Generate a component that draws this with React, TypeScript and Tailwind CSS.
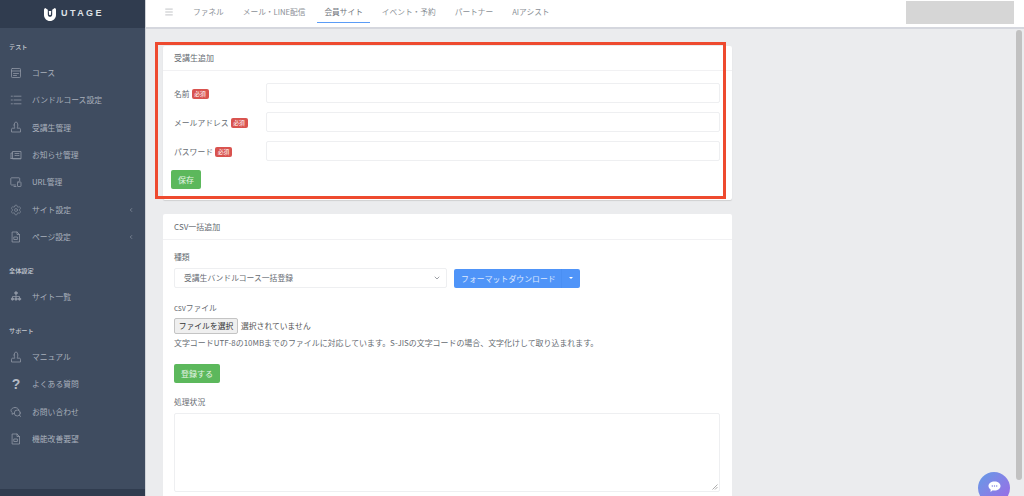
import { ChevronLeft, Menu, ChevronDown, Settings } from "lucide-react";
import React from "react";

const I = ({ children }: { children: React.ReactNode }) => (
  <svg width="12" height="12" viewBox="0 0 12 12" fill="none" stroke="#8f97a5" strokeWidth="0.8" strokeLinecap="round" strokeLinejoin="round">
    {children}
  </svg>
);

const icons: Record<string, React.ReactNode> = {
  course: <I><rect x="1.5" y="1.5" width="9" height="9" rx="0.8" /><path d="M1.5 4h9M3.5 6.500h5M3.500 8.500h3" /></I>,
  list: <I><path d="M1.200 2.200h1.200M1.200 6h1.200M1.200 9.800h1.200M4 2.200h7M4 6h7M4 9.800h7" /></I>,
  user: <I><path d="M4.200 4c0-1.600.8-3 1.800-3s1.800 1.400 1.800 3-.5 2.400-.6 3.200H9.500c.5 0 1 .5 1 1V11h-9V8.200c0-.5.500-1 1-1h2.300C4.700 6.400 4.200 5.600 4.200 4z" /></I>,
  news: <I><path d="M1 9.500V4h1.500M2.500 9.500V2.500h8.500v7z" /><path d="M1 9.500h9.500" /><path d="M5 4.500h4M5 6.500h1.500M7.500 6.500h1.500" /></I>,
  url: <I><path d="M5.500 9H1.500a.7.7 0 0 1-.7-.7V2.500a.7.7 0 0 1 .7-.7h7.500a.7.7 0 0 1 .7.7V5" /><path d="M4 10.500h2" /><rect x="7.500" y="6" width="3.500" height="4.500" rx="0.500" /></I>,
  page: <I><path d="M2.500 1h4.500l2.500 2.500V11h-7z" /><path d="M7 1v2.500h2.500" /><rect x="4.200" y="6" width="3.200" height="2.500" /></I>,
  sites: <I><circle cx="6" cy="3" r="1.300" fill="#8f97a5" /><circle cx="2.500" cy="9" r="1.200" fill="#8f97a5" /><circle cx="6" cy="9" r="1.200" fill="#8f97a5" /><circle cx="9.500" cy="9" r="1.200" fill="#8f97a5" /><path d="M6 4.500v3M2.500 7.800V6.500h7v1.300" /></I>,
  chat: <I><path d="M5 1.500c-2.200 0-4 1.300-4 3 0 .9.500 1.700 1.300 2.200L2 8.300l1.800-.8" /><path d="M5 1.500c1.800 0 3.300.9 3.800 2.200" /><circle cx="7.300" cy="7" r="3" /><path d="M9.500 9.200l1 1.300" /></I>,
};

const NavItem = ({ icon, label, arrow }: { icon: React.ReactNode; label: string; arrow?: boolean }) => (
  <div className="h-[27.4px] flex items-center pl-[10px] pr-[11px]">
    <span className="w-[12px] h-[12px] flex items-center justify-center shrink-0">{icon}</span>
    <span className="ml-[10px] text-[7.8px] text-[#a9b0bc] flex-1 whitespace-nowrap">{label}</span>
    {arrow && <ChevronLeft size={6} strokeWidth={2} className="text-[#a9b0bc]" />}
  </div>
);

const Section = ({ children }: { children: React.ReactNode }) => (
  <div className="pl-[9px] text-[6.2px] leading-[10px] text-[#c5cad2] font-medium">{children}</div>
);

const Required = () => (
  <span className="ml-[2px] inline-flex items-center justify-center h-[10px] w-[17px] rounded-[2px] bg-[#d9534f] text-white text-[5.8px] leading-none">必須</span>
);

const Field = ({ label }: { label: string }) => (
  <div className="flex items-center h-[20px]">
    <div className="w-[92px] shrink-0 pt-[2px] flex items-center text-[7.8px] text-[#666b72] whitespace-nowrap">
      {label}
      <Required />
    </div>
    <div className="flex-1 h-[20px] bg-white border border-[#eeeff1] rounded-[2px]" />
  </div>
);

export default function App() {
  return (
    <div className="w-[1024px] h-[496px] overflow-hidden flex relative bg-[#ebecee] font-['Noto_Sans_CJK_JP','Noto_Sans',sans-serif]">
      {/* sidebar */}
      <aside className="w-[146px] shrink-0 h-full bg-[#3f4c60] flex flex-col border-r border-[#cfd2d7]">
        <div className="h-[28px] shrink-0 bg-[#303c4f] flex items-center pl-[44px]">
          <svg width="12" height="13" viewBox="0 0 12 13" fill="#fff">
            <path d="M0 1.800C0 1 .500.400 1.200 0L3.800 1.800 V6.500C3.800 8 4.800 8.800 6 8.800S8.200 8 8.200 6.500V1.800L10.800 0C11.500.400 12 1 12 1.800V7c0 3.300-2.700 6-6 6S0 10.300 0 7z" />
            <path d="M4.800 3h2.400L6.800 7h-1.600z" />
          </svg>
          <span className="ml-[5px] text-[9px] font-bold tracking-[2.4px] text-[#dfe2e7] font-['Liberation_Sans']">UTAGE</span>
        </div>
        <div className="pt-[14px]"><Section>テスト</Section></div>
        <div className="mt-[7px]">
          <NavItem icon={icons.course} label="コース" />
          <NavItem icon={icons.list} label="バンドルコース設定" />
          <NavItem icon={icons.user} label="受講生管理" />
          <NavItem icon={icons.news} label="お知らせ管理" />
          <NavItem icon={icons.url} label="URL管理" />
          <NavItem icon={<Settings size={12} strokeWidth={1.2} className="text-[#8f97a5]" />} label="サイト設定" arrow />
          <NavItem icon={icons.page} label="ページ設定" arrow />
        </div>
        <div className="mt-[15px]"><Section>全体設定</Section></div>
        <div className="mt-[7px]">
          <NavItem icon={icons.sites} label="サイト一覧" />
        </div>
        <div className="mt-[16px]"><Section>サポート</Section></div>
        <div className="mt-[7px]">
          <NavItem icon={icons.user} label="マニュアル" />
          <NavItem icon={<span className="text-[14px] font-bold text-[#b4bac4] leading-none font-['Liberation_Sans']">?</span>} label="よくある質問" />
          <NavItem icon={icons.chat} label="お問い合わせ" />
          <NavItem icon={icons.page} label="機能改善要望" />
        </div>
        <div className="mt-auto h-[7px] bg-[#303c4f]" />
      </aside>

      <div className="flex-1 min-w-0 flex flex-col">
        {/* top bar */}
        <header className="h-[29px] shrink-0 bg-white border-b-2 border-[#d5d7de] flex items-start pl-[18px] pr-[10px]">
          <Menu size={10} strokeWidth={1} className="mt-[7px] text-[#6b7078]" />
          <nav className="flex text-[7.7px] text-[#8a8f96] h-[23px] items-center whitespace-nowrap ml-[19px] gap-[19px]">
            <span>ファネル</span>
            <span>メール・LINE配信</span>
            <span className="relative text-[#70757c]">
              会員サイト
              <span className="absolute left-[-7px] right-[-7px] top-[16px] h-[1.5px] bg-[#5b9cf6]" />
            </span>
            <span>イベント・予約</span>
            <span>パートナー</span>
            <span>AIアシスト</span>
          </nav>
          <div className="ml-auto mt-[1px] w-[108px] h-[23px] bg-[#d6d6d6]" />
        </header>

        {/* content */}
        <div className="flex-1 min-h-0 flex pl-[17px] pr-[2px] overflow-hidden">
          <div className="w-[569px] shrink-0 flex flex-col gap-[14px] pt-[17px]">
            <section className="bg-white rounded-[2px] shadow-[0_1px_1px_rgba(0,0,0,0.12)] h-[154px] shrink-0">
              <div className="h-[25px] border-b border-[#f1f1f3] flex items-center pl-[11px] text-[8px] text-[#666b72]">受講生追加</div>
              <div className="pt-[12px] pl-[11px] pr-[12px] flex flex-col gap-[9px]">
                <Field label="名前" />
                <Field label="メールアドレス" />
                <Field label="パスワード" />
              </div>
              <button className="ml-[8px] mt-[9px] w-[30px] h-[19px] rounded-[2px] bg-[#5cb85c] text-white/85 text-[8px] flex items-center justify-center">保存</button>
            </section>

            <section className="bg-white rounded-[2px] shrink-0 h-[300px] px-[11px] relative">
              <div className="-mx-[11px] h-[26px] border-b border-[#f1f1f3] flex items-center pl-[11px] text-[8px] text-[#666b72]">CSV一括追加</div>
              <div className="mt-[11px] text-[7.8px] leading-[12px] text-[#666b72]">種類</div>
              <div className="mt-[5px] flex items-center">
                <div className="w-[273px] h-[20px] bg-white border border-[#eeeff1] rounded-[2px] flex items-center pl-[9px] pr-[5px] text-[7.8px] text-[#666b72]">
                  <span className="flex-1">受講生バンドルコース一括登録</span>
                  <ChevronDown size={8} className="text-[#6b7078]" />
                </div>
                <div className="ml-[7px] w-[126px] h-[19px] rounded-[2px] bg-[#4f94f8] flex items-center text-white/80 text-[7.8px]">
                  <span className="w-[108px] pl-[7px] tracking-[0.1px] whitespace-nowrap border-r border-[#4a8ff3] leading-[19px]">フォーマットダウンロード</span>
                  <span className="ml-[7px] border-x-[2px] border-t-[2px] border-x-transparent border-t-white w-0 h-0" />
                </div>
              </div>
              <div className="mt-[14px] text-[7.8px] leading-[12px] text-[#666b72]">csvファイル</div>
              <div className="mt-[4px] flex items-center h-[16px]">
                <div className="w-[64px] h-[16px] bg-[#efefef] border border-[#c4c4c4] rounded-[2px] flex items-center justify-center text-[7.8px] text-[#333] whitespace-nowrap">ファイルを選択</div>
                <span className="ml-[3px] text-[7.8px] text-[#555]">選択されていません</span>
              </div>
              <div className="mt-[3px] text-[7.95px] leading-[12px] text-[#666b72] whitespace-nowrap">文字コードUTF-8の10MBまでのファイルに対応しています。S-JISの文字コードの場合、文字化けして取り込まれます。</div>
              <button className="mt-[15px] w-[46px] h-[19px] rounded-[2px] bg-[#5cb85c] text-white/85 text-[8px] flex items-center justify-center">登録する</button>
              <div className="mt-[13px] text-[7.8px] leading-[12px] text-[#666b72]">処理状況</div>
              <div className="mt-[5px] relative w-[546px] h-[79px] bg-white border border-[#eeeff1] rounded-[2px]">
                <svg className="absolute right-[1px] bottom-[1px]" width="6" height="6" viewBox="0 0 6 6" stroke="#777" strokeWidth="0.6"><path d="M0.500 5.500L5.500 0.500M3 5.500L5.500 3" /></svg>
              </div>
            </section>
          </div>
          <div className="ml-auto w-[6px] mt-[1px] h-[450px] rounded-full bg-[#c1c1c1]" />
        </div>
      </div>

      {/* annotation over the first card */}
      <div className="absolute left-[155px] top-[42px] w-[571px] h-[157px] border-[3px] border-[#ee4a2f] pointer-events-none" />

      {/* chat launcher */}
      <div className="absolute left-[978px] top-[472px] w-[32px] h-[32px] rounded-full bg-gradient-to-br from-[#5f9be6] to-[#9b66e6] flex items-start justify-center pt-[9px]">
        <svg width="13" height="12" viewBox="0 0 13 12">
          <path d="M6.500 0.500C10 .500 12.500 2.300 12.500 5S10 9.500 6.500 9.500c-.6 0-1.200-.1-1.700-.2L2.500 11l.2-2.500C1.300 7.700.500 6.400.500 5 .500 2.300 3 .500 6.500.500z" fill="#fff" />
          <circle cx="4.300" cy="5" r="0.700" fill="#7a7fe0" />
          <circle cx="6.500" cy="5" r="0.700" fill="#7a7fe0" />
          <circle cx="8.700" cy="5" r="0.700" fill="#7a7fe0" />
        </svg>
      </div>
    </div>
  );
}
